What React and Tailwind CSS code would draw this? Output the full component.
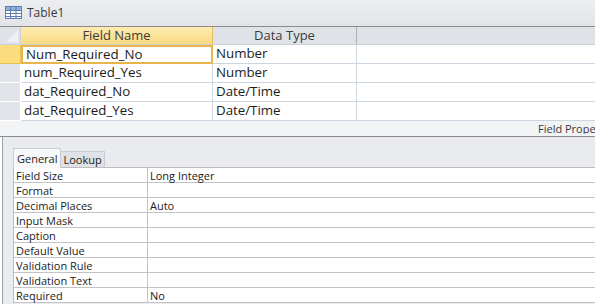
import React from 'react';

const fields = [
  ['Num_Required_No', 'Number'],
  ['num_Required_Yes', 'Number'],
  ['dat_Required_No', 'Date/Time'],
  ['dat_Required_Yes', 'Date/Time'],
];

const props = [
  ['Field Size', 'Long Integer'],
  ['Format', ''],
  ['Decimal Places', 'Auto'],
  ['Input Mask', ''],
  ['Caption', ''],
  ['Default Value', ''],
  ['Validation Rule', ''],
  ['Validation Text', ''],
  ['Required', 'No'],
];

const TableIcon = () => (
  <svg width="17" height="13" viewBox="0 0 17 13" className="shrink-0">
    <rect x="0.5" y="0.5" width="16" height="12" fill="#ffffff" stroke="#5b7fb0" />
    <rect x="1" y="1" width="15" height="3" fill="#8fb0dc" />
    <path d="M1 4.5H16M1 7.5H16M1 10.5H16M5.5 1V12M11 1V12" stroke="#5b7fb0" strokeWidth="1" />
  </svg>
);

export default function App() {
  return (
    <div className="w-[595px] h-[304px] overflow-hidden bg-white text-[#1b1b1b] font-['Open_Sans','Noto_Sans',sans-serif] flex flex-col">
      {/* title bar */}
      <div className="h-[27px] shrink-0 flex items-center gap-[5px] pl-[5px] pb-[1px] bg-gradient-to-b from-[#eceef1] to-[#e2e4e7] border-b border-[#8c8c8c]">
        <TableIcon />
        <span className="text-[12px] leading-none text-[#3b3b3b]">Table1</span>
      </div>

      {/* upper design grid */}
      <div className="shrink-0 flex flex-col">
        <div className="h-[18px] flex bg-[#dfe3e8] border-b border-[#c9d0da] text-[13px] leading-none text-[#3b3b3b]">
          <div className="w-[21px] shrink-0 border-r border-[#c9d0da] relative">
            <svg width="18" height="15" className="absolute left-[2px] top-[1px]">
              <path d="M16 2L4 14H16Z" fill="#eef0f3" />
            </svg>
          </div>
          <div className="w-[192px] shrink-0 flex items-center justify-center bg-gradient-to-b from-[#fdebb0] to-[#fbdb82] border-r border-[#e2c060]">Field Name</div>
          <div className="w-[144px] shrink-0 flex items-center justify-center border-r border-[#a9b0ba]">Data Type</div>
          <div className="flex-1" />
        </div>
        {fields.map(([name, type], i) => (
          <div key={name} className="h-[19px] flex text-[13.3px] leading-none">
            <div className={`w-[21px] shrink-0 border-r border-b ${i === 0 ? 'bg-[#fcdd7e] border-[#e9c35a]' : 'bg-[#e1e4e9] border-[#ffffff]'}`} />
            <div className={`w-[192px] shrink-0 flex items-center pl-[3px] ${i === 0 ? 'border-2 border-[#e8b54a] pl-[2px]' : 'border-r border-b border-[#cdd5e0]'}`}>{name}</div>
            <div className="w-[144px] shrink-0 flex items-center pl-[3px] border-r border-b border-[#cdd5e0]">{type}</div>
            <div className="flex-1 border-b border-[#cdd5e0]" />
          </div>
        ))}
      </div>

      {/* field properties caption */}
      <div className="h-[16px] shrink-0 flex justify-end items-center bg-[#f2f3f5] border-b border-[#8c8c8c] text-[11px] leading-none text-[#3b3b3b]">
        <div className="w-[57px] overflow-hidden whitespace-nowrap">Field Properties</div>
      </div>

      {/* lower pane */}
      <div className="flex-1 bg-[#e9ebee] ml-[2px] border-l border-[#9ea3aa] pl-[10px] pt-[11px] flex flex-col">
        <div className="flex items-end h-[19px] text-[11px] leading-none">
          <div className="h-[20px] -mb-px px-[3px] flex items-center bg-[#f7f8f9] border border-b-0 border-[#c9cdd3] relative z-10">General</div>
          <div className="h-[16px] px-[2px] flex items-center bg-[#dfe2e6] border border-l-0 border-b-0 border-[#c9cdd3]">Lookup</div>
        </div>
        <div className="flex flex-col bg-white border-t border-l border-[#bdbdbd] text-[11px] leading-none">
          {props.map(([label, value]) => (
            <div key={label} className="h-[15px] flex border-b border-[#c3c3c3]">
              <div className="w-[134px] shrink-0 flex items-center pl-[2px] border-r border-[#c3c3c3]">{label}</div>
              <div className="flex-1 flex items-center pl-[2px]">{value}</div>
            </div>
          ))}
        </div>
      </div>
    </div>
  );
}
